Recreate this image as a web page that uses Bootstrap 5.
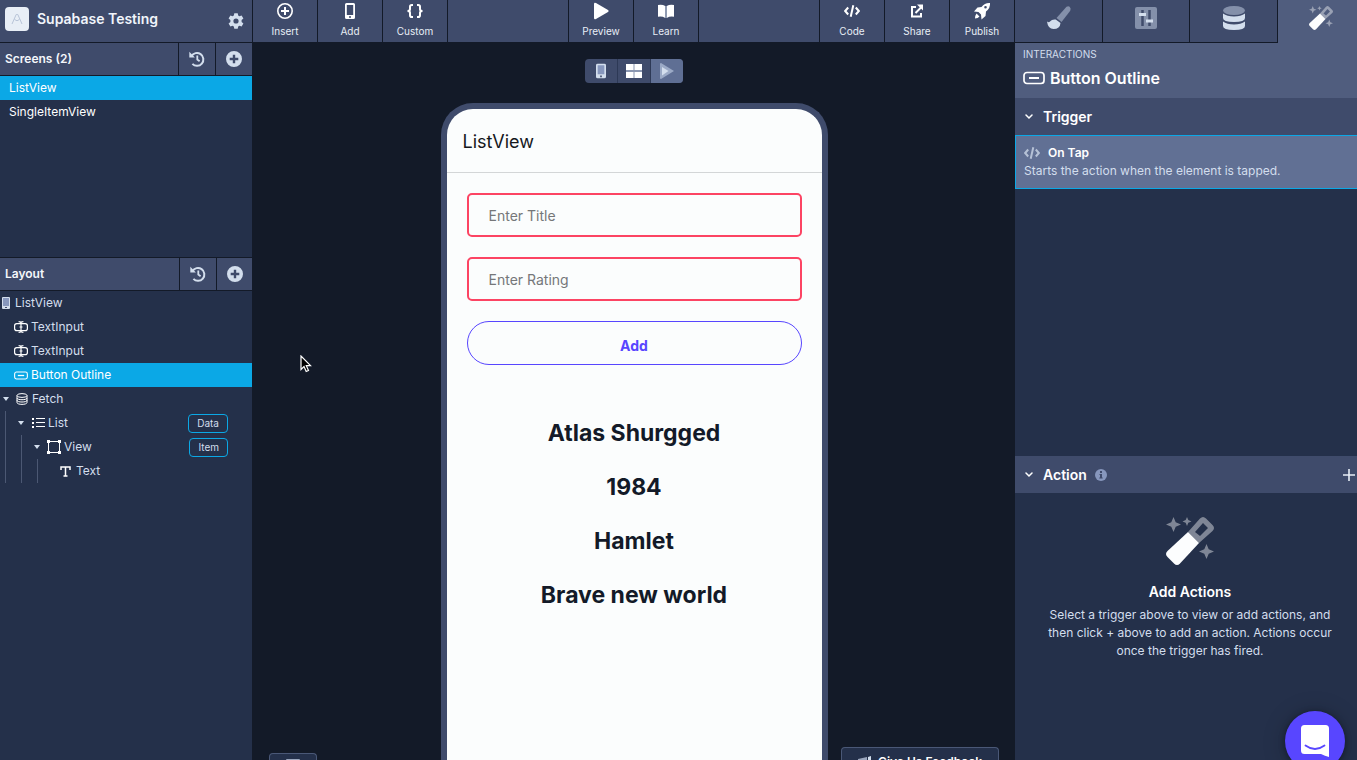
<!DOCTYPE html>
<html lang="en">
<head>
<meta charset="utf-8">
<meta name="viewport" content="width=device-width, initial-scale=1">
<title>Supabase Testing</title>
<link href="https://cdn.jsdelivr.net/npm/bootstrap@5.3.0/dist/css/bootstrap.min.css" rel="stylesheet">
<style>
:root{--bar:#3f4b6b;--line:#131a28;--panel:#24304a;--cyan:#0ba8e6;--pale:#d3deed;--tab:#505d7e}
body{font-family:Inter,"Liberation Sans",sans-serif;font-size:12px;line-height:18px;background:var(--line);color:var(--pale);overflow:hidden}
svg{display:block;flex-shrink:0}
button,a{color:inherit;text-decoration:none}
.plain{border:0;background:none;padding:0;color:inherit}
.bar{background:var(--bar)}
.head-row{height:43px;border-bottom:1px solid var(--line)}

/* left sidebar */
.side{width:253px;background:var(--panel);border-right:1px solid var(--line)}
.side-head{padding:0 8px 4px 5px;gap:8px}
.project{font-size:14px;font-weight:600;color:#f1f5fb}
.logo-tile{width:24px;height:24px;border-radius:4px;background:#e8eef6}
.pane-bar{height:33px;padding-left:5px;border-bottom:1px solid var(--line);font-weight:600;color:#f4f7fb}
.pane-bar-layout{height:34px;border-top:1px solid var(--line)}
.pane-btn{width:37px;border-left:1px solid var(--line)!important;color:var(--pale)}
.pane-bar-layout .pane-btn:last-child{width:36px}
.screens{height:181px}
.screens .tree-row{padding-left:9px}
.tree-row{height:24px;gap:3px}
.tree-row.active{background:var(--cyan);color:#fff}
.indent{padding-left:14px}
.root-node{padding-left:1px;gap:4px}
.fetch-node{padding-left:3px;gap:4px}
.fetch-node svg+svg{margin-left:3px}
.tree-row svg+svg.after-caret{margin-left:5px}
.guide{width:16px;height:24px;border-left:1px solid #4c5873}
.guide:first-child{margin-left:5px}
.lead-caret{margin-left:-3px}
.text-node{padding-left:7px;gap:5px}
.pill{height:19px;border:1px solid var(--cyan);border-radius:4px;font-size:10px;line-height:17px;padding:0 8px;margin-right:24px;color:var(--pale)}

/* canvas */
.tool{width:65px;height:42px;padding-top:2px;border-right:1px solid var(--line)!important;font-size:10px;line-height:14px;color:#e8eef6;gap:4px}
.tool svg{color:#fff}
.tool-first{border-left:1px solid var(--line)}
.canvas{background:var(--line)}
.view-switch{margin-top:16px;height:24px;border-radius:4px;overflow:hidden;background:var(--bar)}
.view-switch button{width:33px;border-right:1px solid #2d3956}
.view-switch .active{background:#5f6f94;border:0;width:32px}
.phone{width:387px;margin-top:20px;border:6px solid var(--bar);border-bottom:0;border-radius:32px 32px 0 0;background:#fbfdfd;overflow:hidden}
.phone-head{height:64px;border-bottom:1px solid #d3d6d7;padding:3px 16px 0;font-size:18px;color:#15171c}
.phone-body{padding:20px;gap:20px}
.field,.field:focus{height:44px;border:2px solid #fc4463;border-radius:5px;background:#fbfdfd;padding:0 20px;font-size:14px;box-shadow:none;color:#333}
.field::placeholder{color:#757779}
.add-btn{height:44px;border:1px solid #5846ff;border-radius:22px;color:#5846ff;font-size:14px;font-weight:700;padding:5px 0 0}
.titles{padding-top:21px}
.titles li{height:54px;line-height:54px;font-size:23px;font-weight:700;color:#131a28;text-align:center}
.dock{height:28px;border:1px solid #4a5877;border-bottom:0;border-radius:4px 4px 0 0;background:var(--panel);color:#fff;font-weight:600}
.dock-keys{left:16px;bottom:-21px;width:48px}
.dock-keys svg{margin-top:5px}
.dock-feed{right:16px;bottom:-15px;width:158px;gap:6px}
.cursor{left:47px;top:355px;pointer-events:none}

/* inspector */
.inspector{width:342px;background:var(--panel)}
.tabs{display:grid;grid-template-columns:88px 87px 88px 1fr;height:43px}
.tabs button{background:var(--bar);border:0;border-right:1px solid var(--line);border-bottom:1px solid var(--line);color:var(--pale);padding:0 0 6px}
.tabs .active{background:var(--tab);border:0;padding:0 0 7px 7px;color:#fff}
.subject{background:var(--tab);height:55px;padding:3px 8px}
.eyebrow{font-size:10px;line-height:16px}
.subject h1{font-size:16px;line-height:24px;font-weight:600;color:#fff;margin:4px 0 0;gap:5px}
.section{height:37px;padding-left:8px;font-size:14px;font-weight:600;color:#fff;gap:8px}
.trigger{height:54px;border:1px solid var(--cyan);border-right:0;background:#617094;padding:8px;text-align:left}
.action-space{height:267px}
.empty{padding:22px 24px 0 32px}
.empty h2{font-size:14px;line-height:20px;font-weight:600;color:#fff;margin:15px 0 4px}
.chat{right:12px;bottom:-11px;width:60px;height:60px;border-radius:50%;background:#5846ff;box-shadow:0 1px 6px #0006,0 2px 24px #0003}
</style>
</head>
<body class="vh-100 d-flex position-relative">

<svg width="0" height="0" class="position-absolute" aria-hidden="true">
 <symbol id="i-history" viewBox="0 0 16 16"><path d="M2.4 5.2A6.4 6.4 0 1 1 3.4 12.9" fill="none" stroke="currentColor" stroke-width="2"/><path d="M.3.8v5.6h5.6z" fill="currentColor"/><path d="M8.3 4.5v4l2.3 1.8" fill="none" stroke="currentColor" stroke-width="1.8"/></symbol>
 <symbol id="i-plus-disc" viewBox="0 0 16 16"><path fill="currentColor" fill-rule="evenodd" d="M8 0a8 8 0 1 1 0 16A8 8 0 0 1 8 0ZM6.8 3.7v3.1H3.7v2.4h3.1v3.1h2.4V9.2h3.1V6.8H9.2V3.7Z"/></symbol>
 <symbol id="i-phone" viewBox="0 0 12 18"><rect width="12" height="18" rx="2" fill="#d3deed"/><path d="M2 2h8v11H2z" fill="#8797bd"/><path d="M5 14.5h2v2H5z" fill="#3f4b6b"/></symbol>
 <symbol id="i-input" viewBox="0 0 14 12"><g fill="none" stroke="currentColor" stroke-width="1.2"><rect x=".6" y="2.6" width="12.8" height="7" rx="2.2"/><path d="M7 1v10M4.6.7C6 .7 7 1 7 2c0-1 1-1.3 2.4-1.3M4.6 11.3C6 11.3 7 11 7 10c0 1 1 1.3 2.4 1.3M5.5 6h3"/></g></symbol>
 <symbol id="i-outline" viewBox="0 0 22 14"><rect x="1" y="1.5" width="20" height="11" rx="3" fill="none" stroke="currentColor" stroke-width="1.7"/><path d="M6 7h10" stroke="currentColor" stroke-width="2"/></symbol>
 <symbol id="i-caret" viewBox="0 0 6 4"><path d="M0 0h6L3 4z" fill="currentColor"/></symbol>
 <symbol id="i-code" viewBox="0 0 16 12"><path d="M4.2 2.5 1.2 6l3 3.5M11.8 2.5l3 3.500-3 3.500M9.3.3 6.7 11.7" fill="none" stroke="currentColor" stroke-width="2"/></symbol>
 <symbol id="i-chev" viewBox="0 0 8 6"><path d="m1 1 3 3 3-3" fill="none" stroke="currentColor" stroke-width="1.5" stroke-linecap="round"/></symbol>
 <symbol id="i-wand" viewBox="0 0 48 48"><path fill="#fcfdfe" d="M22 15 33 26 14 46.500q-3 3-6 0L1.500 40q-3-3 0-6Z"/><path fill="#fff" fill-opacity=".42" fill-rule="evenodd" d="M22 15 34 1.500q3-3 6 0L46.500 8q3 3 0 6L33 26ZM29 15l5 4 8-8-5-5Z"/><path fill="#fff" fill-opacity=".42" d="m7.500 0 2.200 5.300L15 7.500 9.700 9.700 7.500 15 5.300 9.700 0 7.500l5.300-2.200ZM21 0l1.300 3L25.500 4.500l-3.200 1.300L21 9l-1.300-3.200-3.200-1.300L19.700 3ZM40.500 27l2.200 5.300 5.300 2.200-5.300 2.200-2.200 5.300-2.200-5.300-5.300-2.200 5.300-2.200Z"/></symbol>
</svg>

<aside class="side d-flex flex-column flex-shrink-0">
 <header class="bar head-row side-head d-flex align-items-center">
  <span class="logo-tile d-flex align-items-center justify-content-center"><svg width="12" height="12" viewBox="0 0 12 12" fill="none" stroke="#b8c4d8"><path d="m1 11 4.200-9.500h1.600L11 11M3.500 6.500Q6 9 8.500 6.500"/></svg></span>
  <span class="project flex-grow-1">Supabase Testing</span>
  <button class="plain pt-1" aria-label="Settings"><svg width="16" height="16" viewBox="0 0 16 16"><path fill="currentColor" fill-rule="evenodd" d="m6.300.2-.5 2.300-1.200.7-2.200-.8L.6 5.400l1.800 1.700v1.800L.6 10.600l1.800 3 2.200-.8 1.200.7.500 2.300h3.400l.5-2.300 1.200-.7 2.200.8 1.800-3-1.800-1.700V7.100l1.800-1.700-1.800-3-2.200.8-1.200-.7L9.700.2ZM8 5.400a2.600 2.600 0 1 1 0 5.200 2.600 2.600 0 0 1 0-5.200Z"/></svg></button>
 </header>
 <div class="bar pane-bar d-flex">
  <span class="flex-grow-1 align-self-center">Screens (2)</span>
  <button class="plain pane-btn d-flex align-items-center justify-content-center" aria-label="Screen history"><svg width="16" height="16"><use href="#i-history"/></svg></button>
  <button class="plain pane-btn d-flex align-items-center justify-content-center" aria-label="New screen"><svg width="16" height="16"><use href="#i-plus-disc"/></svg></button>
 </div>
 <nav class="screens">
  <a href="#" class="tree-row active d-flex align-items-center">ListView</a>
  <a href="#" class="tree-row d-flex align-items-center text-white">SingleItemView</a>
 </nav>
 <div class="bar pane-bar pane-bar-layout d-flex">
  <span class="flex-grow-1 align-self-center">Layout</span>
  <button class="plain pane-btn d-flex align-items-center justify-content-center" aria-label="Layout history"><svg width="16" height="16"><use href="#i-history"/></svg></button>
  <button class="plain pane-btn d-flex align-items-center justify-content-center" aria-label="New element"><svg width="16" height="16"><use href="#i-plus-disc"/></svg></button>
 </div>
 <nav>
  <a href="#" class="tree-row root-node d-flex align-items-center"><svg width="10" height="13" viewBox="0 0 10 13"><rect x="1" width="8" height="12" rx="1" fill="#d3deed"/><path d="M2 1h6v8H2z" fill="#8797bd"/><path d="M4 10h2v1H4z" fill="#3f4b6b"/></svg>ListView</a>
  <a href="#" class="tree-row d-flex align-items-center indent"><svg class="text-white" width="14" height="12"><use href="#i-input"/></svg>TextInput</a>
  <a href="#" class="tree-row d-flex align-items-center indent"><svg class="text-white" width="14" height="12"><use href="#i-input"/></svg>TextInput</a>
  <a href="#" class="tree-row active d-flex align-items-center indent"><svg width="14" height="9"><use href="#i-outline"/></svg>Button Outline</a>
  <a href="#" class="tree-row fetch-node d-flex align-items-center"><svg width="6" height="4"><use href="#i-caret"/></svg><svg width="12" height="12" viewBox="0 0 12 12" fill="none" stroke="#fff"><ellipse cx="6" cy="2.500" rx="5" ry="1.900"/><path d="M1 2.500v7c0 2.500 10 2.500 10 0v-7M1 5c0 2.300 10 2.300 10 0M1 7.300c0 2.300 10 2.300 10 0"/></svg>Fetch</a>
  <div class="d-flex"><span class="guide"></span><a href="#" class="tree-row d-flex align-items-center flex-grow-1"><svg class="lead-caret" width="6" height="4"><use href="#i-caret"/></svg><svg class="after-caret" width="13" height="12" viewBox="0 0 13 12" fill="#fff"><path d="M0 1h2v2H0zm0 4h2v2H0zm0 4h2v2H0zM4 1h9v1H4zm0 4h9v1H4zm0 4h9v1H4z"/></svg>List</a><button class="plain pill align-self-center">Data</button></div>
  <div class="d-flex"><span class="guide"></span><span class="guide"></span><a href="#" class="tree-row d-flex align-items-center flex-grow-1"><svg class="lead-caret" width="6" height="4"><use href="#i-caret"/></svg><svg class="ms-1" width="14" height="14" viewBox="0 0 14 14" fill="#fff"><path d="M0 0h3v3H0zm11 0h3v3h-3zM0 11h3v3H0zm11 0h3v3h-3z"/><path d="M1.500 1.500h11v11h-11z" fill="none" stroke="#fff"/></svg>View</a><button class="plain pill align-self-center">Item</button></div>
  <div class="d-flex"><span class="guide"></span><span class="guide"></span><span class="guide"></span><a href="#" class="tree-row d-flex align-items-center text-node"><svg width="11" height="11" viewBox="0 0 11 11"><path d="M1 4V1h9v3M5.500 1v9M3.500 10h4" stroke="#fff" stroke-width="1.500" fill="none"/></svg>Text</a></div>
 </nav>
</aside>

<main class="canvas flex-grow-1 d-flex flex-column align-items-center position-relative overflow-hidden">
 <header class="bar head-row w-100 d-flex justify-content-between flex-shrink-0">
  <div class="d-flex">
   <button class="plain tool d-flex flex-column align-items-center"><svg width="18" height="18" viewBox="0 0 18 18" fill="none" stroke="currentColor" stroke-width="1.600"><circle cx="9" cy="9" r="7.200"/><path d="M9 5v8M5 9h8" stroke-width="2"/></svg>Insert</button>
   <button class="plain tool d-flex flex-column align-items-center"><svg width="18" height="18" viewBox="0 0 18 18"><path fill="currentColor" fill-rule="evenodd" d="M5.500 1h7Q14 1 14 2.500v13q0 1.500-1.500 1.500h-7Q4 17 4 15.500v-13Q4 1 5.500 1Zm.3 2v10h6.400V3ZM8 14.200v1.500h2v-1.500Z"/></svg>Add</button>
   <button class="plain tool d-flex flex-column align-items-center"><svg width="18" height="18" viewBox="0 0 18 18" fill="none" stroke="currentColor" stroke-width="2"><path d="M7 3H5.800Q4 3 4 4.800v2.400Q4 9 1.500 9 4 9 4 10.800v2.400Q4 15 5.800 15H7M11 3h1.200Q14 3 14 4.800v2.400Q14 9 16.500 9 14 9 14 10.800v2.400q0 1.800-1.800 1.800H11"/></svg>Custom</button>
  </div>
  <div class="d-flex tool-first">
   <button class="plain tool d-flex flex-column align-items-center"><svg width="18" height="18" viewBox="0 0 18 18"><path fill="currentColor" d="M2 2q0-2 2-1l12 7q1.500 1 0 2L4 17q-2 1-2-1Z"/></svg>Preview</button>
   <button class="plain tool d-flex flex-column align-items-center"><svg width="18" height="18" viewBox="0 0 18 18"><path fill="currentColor" d="M1 3q4-1 7.300 1v12Q5 14 1 14.800ZM17 3q-4-1-7.300 1v12q3.300-2 7.300-1.200Z"/><path d="M8.300 4h1.400v12H8.300z" fill="#9aa6bd"/></svg>Learn</button>
  </div>
  <div class="d-flex tool-first">
   <button class="plain tool d-flex flex-column align-items-center"><svg width="18" height="18"><use href="#i-code" x="1" y="3" width="16" height="12"/></svg>Code</button>
   <button class="plain tool d-flex flex-column align-items-center"><svg width="18" height="18" viewBox="0 0 18 18"><path d="M8 5H4v9.500h9V11M7.500 11l6-6" fill="none" stroke="currentColor" stroke-width="2"/><path d="M9 2.500h6v6z" fill="currentColor"/></svg>Share</button>
   <button class="plain tool d-flex flex-column align-items-center"><svg width="18" height="18" viewBox="0 0 18 18"><path fill="currentColor" fill-rule="evenodd" d="M17 1q.5 5-4 8.500L12.500 14 8.500 17.500 8 12.500 5.500 10 1 9.500 4.500 5.500 8.500 5Q12 .5 17 1ZM12.500 4a1.300 1.300 0 1 0 0 2.600 1.300 1.300 0 0 0 0-2.600ZM3.500 11.500l3 3q-1.500 2-4.500 2 0-3 1.500-5Z"/></svg>Publish</button>
  </div>
 </header>

 <div class="view-switch d-flex flex-shrink-0">
  <button class="plain d-flex align-items-center justify-content-center" aria-label="Phone view"><svg width="10" height="16" viewBox="0 0 12 18"><use href="#i-phone" width="12" height="18"/></svg></button>
  <button class="plain d-flex align-items-center justify-content-center" aria-label="Grid view"><svg width="16" height="14" viewBox="0 0 16 14"><path fill="#8b97b1" d="M0 0h16v14H0z"/><path fill="#fff" d="M0 0h7.500v6H0zm8.500 0H16v6H8.500zM0 8h7.500v6H0zm8.500 0H16v6H8.500z"/></svg></button>
  <button class="plain active d-flex align-items-center justify-content-center" aria-label="Play"><svg width="14" height="16" viewBox="0 0 14 16"><path fill="#9baac6" d="M0 1q0-1 1-1l13 8L1 16q-1 0-1-1Z"/><path fill="#d3deed" d="M2 4l6.500 4L2 12.500Z"/></svg></button>
 </div>

 <section class="phone flex-grow-1 d-flex flex-column">
  <div class="phone-head d-flex align-items-center flex-shrink-0">ListView</div>
  <div class="phone-body d-flex flex-column">
   <input type="text" class="form-control field" placeholder="Enter Title" aria-label="Enter Title">
   <input type="text" class="form-control field" placeholder="Enter Rating" aria-label="Enter Rating">
   <button class="plain add-btn">Add</button>
   <ul class="titles list-unstyled mb-0"><li>Atlas Shurgged</li><li>1984</li><li>Hamlet</li><li>Brave new world</li></ul>
  </div>
 </section>

 <button class="plain dock dock-keys position-absolute d-flex justify-content-center" aria-label="Keyboard shortcuts"><svg width="14" height="10" viewBox="0 0 14 10"><rect width="14" height="10" rx="1" fill="#9aa6bd"/></svg></button>
 <button class="plain dock dock-feed position-absolute d-flex align-items-center justify-content-center"><svg width="14" height="12" viewBox="0 0 14 12"><path fill="#9aa6bd" d="M0 3 9 1v10L0 8Z"/><path fill="#d3deed" d="m10 1 3-1v12l-3-1Z"/></svg>Give Us Feedback</button>
 <svg class="cursor position-absolute" width="12" height="18" viewBox="0 0 12 18"><path d="M1 1v13.500l3-3 2.200 5 2.300-1-2.200-4.800h4.200Z" fill="#000" stroke="#fff" stroke-width="1.200"/></svg>
</main>

<aside class="inspector flex-shrink-0 d-flex flex-column">
 <div class="tabs">
  <button class="d-flex align-items-center justify-content-center" aria-label="Style"><svg width="24" height="24" viewBox="0 0 24 24"><path fill="#8490aa" d="M19.500.8q3-1.500 4 1.500.3 1.500-1 3.500L14.500 16 9.500 12Z"/><path fill="#d3deed" d="M8.700 13.500 13.500 17q-.5 6-7 6Q1 23 0 15.500q2 1.500 3 0 2-2.500 5.700-2Z"/></svg></button>
  <button class="d-flex align-items-center justify-content-center" aria-label="Configuration"><svg width="22" height="22" viewBox="0 0 22 22"><rect width="22" height="22" rx="2" fill="#8490aa"/><path d="M7.500 3v16M14.500 3v16" stroke="#3f4b6b" stroke-width="2.500"/><path d="M4 7.500h7M11 14h7" stroke="#d3deed" stroke-width="3"/></svg></button>
  <button class="d-flex align-items-center justify-content-center" aria-label="Data"><svg width="22" height="24" viewBox="0 0 22 24"><ellipse cx="11" cy="4.500" rx="11" ry="4.500" fill="#8490aa"/><path fill="#d3deed" d="M0 7.500q4 3 11 3t11-3V12q0 4-11 4T0 12ZM0 15.500q4 3 11 3t11-3V20q0 4-11 4T0 20Z"/></svg></button>
  <button class="active d-flex align-items-center justify-content-center" aria-label="Interactions"><svg width="24" height="24"><use href="#i-wand"/></svg></button>
 </div>
 <div class="subject">
  <div class="eyebrow">INTERACTIONS</div>
  <h1 class="d-flex align-items-center"><svg width="22" height="14"><use href="#i-outline"/></svg>Button Outline</h1>
 </div>
 <div class="section bar d-flex align-items-center flex-shrink-0"><svg width="12" height="6"><use href="#i-chev"/></svg>Trigger</div>
 <button class="plain trigger flex-shrink-0"><span class="d-flex align-items-center gap-2 text-white fw-semibold"><svg width="16" height="12" color="#b5c1d6"><use href="#i-code"/></svg>On Tap</span><span class="d-block">Starts the action when the element is tapped.</span></button>
 <div class="flex-shrink-0 action-space"></div>
 <div class="section bar d-flex align-items-center flex-shrink-0"><svg width="12" height="6"><use href="#i-chev"/></svg>Action
  <svg width="12" height="12" viewBox="0 0 12 12"><circle cx="6" cy="6" r="6" fill="#8797bd"/><path d="M5 2h2v2H5zM4.500 5H7v3.500h.7v1H4.300v-1H5V6h-.5z" fill="#3f4b6b"/></svg>
  <button class="plain ms-auto" aria-label="Add action"><svg width="15" height="12" viewBox="0 0 15 12"><path d="M7 0v12M1 6h12" stroke="#e8eef6" stroke-width="1.600"/></svg></button>
 </div>
 <div class="empty text-center"><svg class="mx-auto" width="52" height="52" viewBox="0 0 52 52"><use href="#i-wand" x="2" y="2" width="48" height="48"/></svg>
  <h2>Add Actions</h2><p class="mb-0">Select a trigger above to view or add actions, and then click + above to add an action. Actions occur once the trigger has fired.</p>
 </div>
</aside>

<button class="plain chat position-absolute d-flex align-items-center justify-content-center" aria-label="Open chat"><svg width="28" height="32" viewBox="0 0 28 32"><path fill="#fff" d="M3.500 0h21Q28 0 28 3.500V32q-4-1-8-3H3.500Q0 29 0 25.500v-22Q0 0 3.500 0Z"/><path d="M4.500 20.500q9.500 7 19 0" fill="none" stroke="#5846ff" stroke-width="1.800" stroke-linecap="round"/></svg></button>
<script src="https://cdn.jsdelivr.net/npm/bootstrap@5.3.0/dist/js/bootstrap.bundle.min.js"></script>
</body>
</html>
